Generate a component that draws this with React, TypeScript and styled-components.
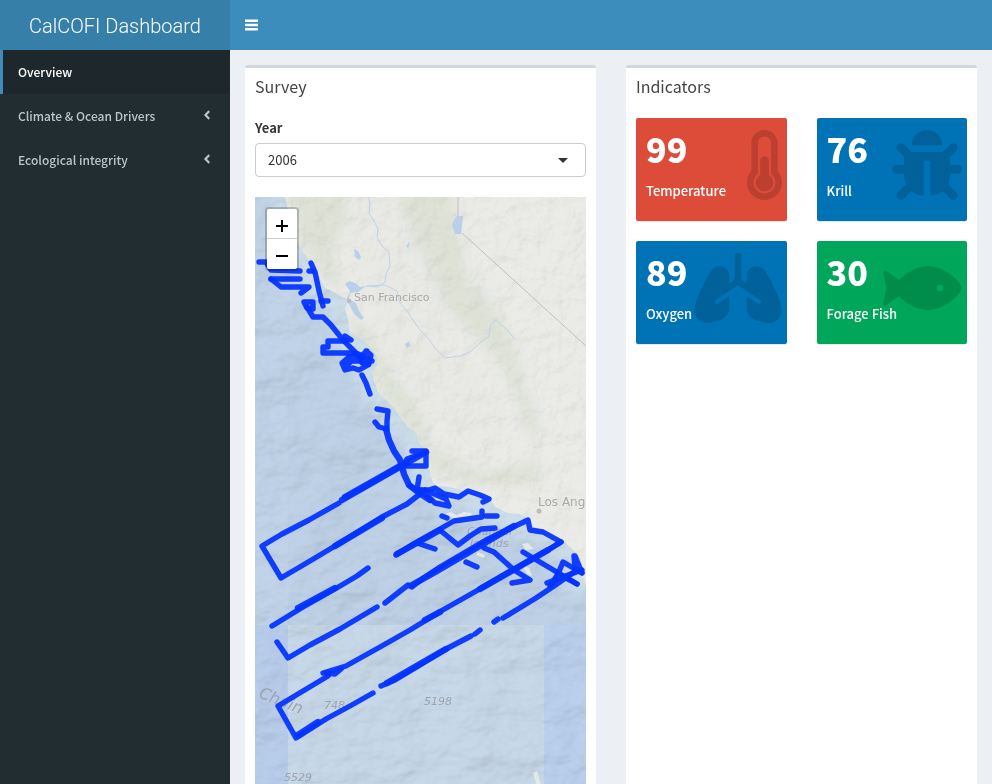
import React from "react";
import styled, { createGlobalStyle } from "styled-components";
import { FaAngleLeft, FaThermometerHalf, FaBug, FaLungs, FaFish } from "react-icons/fa";
import type { IconType } from "react-icons";

const Global = createGlobalStyle`
  *, *::before, *::after { box-sizing: border-box; }
  body {
    margin: 0;
    background: #222d32;
    color: #333;
    font: 400 13px/20px "Noto Sans CJK SC", "Open Sans", sans-serif;
  }
  button, select { font: inherit; color: inherit; }
`;

const Shell = styled.div`
  display: flex;
  flex-direction: column;
  min-height: 100vh;
`;

const Header = styled.header`
  display: flex;
  height: 50px;
  background: #3c8dbc;
  color: #fff;
`;

const Logo = styled.a`
  flex: 0 0 230px;
  background: #367fa9;
  color: #fff;
  font: 300 20px/52px Roboto, "Liberation Sans", Helvetica, sans-serif;
  text-align: center;
  text-decoration: none;
`;

const MenuToggle = styled.button`
  display: flex;
  align-items: center;
  padding: 0 15px;
  border: 0;
  background: none;
  cursor: pointer;
`;

const Columns = styled.div`
  display: flex;
  flex: 1;
`;

const Sidebar = styled.nav`
  flex: 0 0 230px;
  background: #222d32;
`;

const NavLink = styled.a<{ $active?: boolean }>`
  display: flex;
  align-items: center;
  justify-content: space-between;
  height: 44px;
  padding: 0 16px 0 15px;
  border-left: 3px solid ${(p) => (p.$active ? "#3c8dbc" : "transparent")};
  background: ${(p) => (p.$active ? "#1e282c" : "transparent")};
  color: ${(p) => (p.$active ? "#fff" : "#b8c7ce")};
  font-size: 12px;
  font-weight: 500;
  text-decoration: none;
  > svg { margin-bottom: 2px; }
`;

const Content = styled.main`
  display: grid;
  flex: 1;
  grid-template-columns: 1fr 1fr;
  gap: 30px;
  padding: 15px 15px 0;
  background: #ecf0f5;
`;

const Box = styled.section`
  display: flex;
  flex-direction: column;
  min-width: 0;
  border-top: 3px solid #d2d6de;
  border-radius: 3px 3px 0 0;
  background: #fff;
`;

const BoxTitle = styled.h3`
  margin: 0;
  padding: 8px 10px 12px;
  color: #444;
  font-size: 16px;
  font-weight: 400;
  line-height: 20px;
`;

const BoxBody = styled.div`
  display: flex;
  flex: 1;
  flex-direction: column;
  padding: 10px 10px 0;
`;

const FieldLabel = styled.label`
  margin-bottom: 5px;
  font-weight: 700;
`;

const SelectWrap = styled.div`
  display: grid;
  align-items: center;
  margin-bottom: 20px;
  > * { grid-area: 1 / 1; }
  > svg { justify-self: end; margin-right: 18px; pointer-events: none; }
`;

const Select = styled.select`
  width: 100%;
  height: 34px;
  padding: 0 12px;
  border: 1px solid #ccc;
  border-radius: 4px;
  background: #fff;
  appearance: none;
`;

const MapFrame = styled.div`
  position: relative;
  flex: 1;
  min-height: 400px;
  overflow: hidden;
  background: #b9cee4;
`;

const MapArt = styled.svg`
  position: absolute;
  inset: 0;
  width: 100%;
  height: 100%;
`;

const ZoomBar = styled.div`
  position: absolute;
  top: 10px;
  left: 10px;
  border: 2px solid rgba(0, 0, 0, 0.2);
  border-radius: 4px;
  background-clip: padding-box;
`;

const ZoomButton = styled.button`
  display: flex;
  align-items: center;
  justify-content: center;
  width: 30px;
  height: 30px;
  padding: 4px 0 0;
  border: 0;
  background: #fff;
  color: #000;
  cursor: pointer;
  &:first-child { border-bottom: 1px solid #ccc; border-radius: 2px 2px 0 0; }
  &:last-child { border-radius: 0 0 2px 2px; }
`;

const Tiles = styled.div`
  display: grid;
  grid-template-columns: 1fr 1fr;
  gap: 20px 30px;
`;

const Tile = styled.article<{ $color: string }>`
  position: relative;
  height: 103px;
  padding: 10px;
  border-radius: 2px;
  background: ${(p) => p.$color};
  box-shadow: 0 1px 1px rgba(0, 0, 0, 0.1);
  color: #fff;
`;

const TileIcon = styled.span<{ $width: number }>`
  position: absolute;
  top: 12px;
  right: 5px;
  color: rgba(0, 0, 0, 0.15);
  line-height: 0;
  > svg { width: ${(p) => p.$width}px; height: 70px; }
`;

const TileValue = styled.h4`
  position: relative;
  margin: 0 0 10px;
  font-size: 34px;
  font-weight: 900;
  line-height: 42px;
`;

const TileLabel = styled.p`
  position: relative;
  margin: 0;
  font-weight: 500;
  line-height: 22px;
`;

const COAST =
  "285,197 289,215 295,236 300,248 306,256 313,268 320,279 325,288 334,292 342,297 348,299 347,304 345,309 348,319 349,330 355,336 363,340 371,348 377,357 377,365 372,372 374,381 378,392 386,400 394,408 400,417 408,427 417,434 418,442 423,447 427,456 429,468 431,478 435,486 450,487 465,491 480,493 490,498 495,507 508,513 519,514 527,518 532,526 543,530 553,534 563,540 571,548 579,556 582,566 582,576 588,588";

const THIN = 5.4;
const THICK = 6.4;

/* Ship tracks: [points, stroke width] */
const TRACKS: [string, number][] = [
  ["259,262 266,262 271,270 300,271", THIN],
  ["271,279 300,279", THIN],
  ["271,279 281,287 309,287 301,293", THIN],
  ["311,263 315,272 319,291 323,306", THIN],
  ["309,271 313,271", THIN],
  ["321,301 328,301", THIN],
  ["304,302 313,302 313,309 307,308 304,302", THIN],
  ["307,307 313,317 323,317 331,325 343,340 358,355", THIN],
  ["345,336 351,340", THIN],
  ["347,341 328,341 328,347 323,347 323,353 355,353", THIN],
  ["367,351 361,356 349,357 342,363 345,370 353,368 359,370 368,365 371,355 366,351 362,361 351,361 347,366", THIN],
  ["369,364 362,363 358,354 372,361", THIN],
  ["362,375 366,383 370,394", THIN],
  ["377,409 388,411 387,421 387,429 379,427 375,422", THIN],
  ["386,429 389,440 394,451 400,460 404,474 409,485 418,492 430,500", THICK],
  ["412,451 426,451 426,466 403,466 407,459 426,452", THIN],
  ["426,452 342,500", THICK],
  ["339,503 309,520 282,534 262,546 281,578 310,561 340,543 382,517 407,504 420,494", THIN],
  ["345,497 400,466", THICK],
  ["335,546 382,518", THICK],
  ["419,477 417,490 410,486", THIN],
  ["418,490 429,490 435,488 444,494 459,497 468,491 480,495 489,499 483,502", THIN],
  ["421,490 435,503 449,506 446,499 425,490", THIN],
  ["396,555 415,543 440,529 454,521 482,517 482,511", THIN],
  ["397,554 440,530", THICK],
  ["442,516 447,518", THIN],
  ["486,516 497,516", THIN],
  ["441,531 458,545 470,536 481,529 495,528", THIN],
  ["420,544 435,549", THIN],
  ["466,562 477,567", THIN],
  ["385,603 408,585 412,587 422,579 440,567 486,540 528,520 530,530 543,532 561,542 548,550", THIN],
  ["412,585 437,571 483,544 514,526", THICK],
  ["561,542 548,550 513,570 471,594 441,611 410,630 380,647 346,666 323,673", THIN],
  ["548,550 480,589", THICK],
  ["440,612 425,620", THICK],
  ["484,548 494,552 514,570 530,580 512,583", THIN],
  ["523,552 550,568 577,584", THIN],
  ["574,556 575,567 582,573 575,556", THIN],
  ["582,573 563,562 558,574 550,586", THIN],
  ["577,570 554,586 536,598 518,609 503,618", THIN],
  ["547,583 560,578 582,570", THIN],
  ["558,574 570,580 577,584", THIN],
  ["272,626 303,607 335,589 357,576 368,568", THIN],
  ["298,608 335,588", THICK],
  ["277,642 288,658 310,645 340,629 377,607", THIN],
  ["326,673 335,674 341,669", THIN],
  ["328,676 278,706 296,738 326,719 350,706 373,693", THIN],
  ["318,722 298,735", THICK],
  ["381,686 395,680 420,665 446,649 471,636", THIN],
  ["387,683 446,649", THICK],
  ["475,634 480,630", THIN],
  ["494,622 498,619", THIN],
];

function SurveyMap() {
  return (
    <MapArt viewBox="255 197 331 587" preserveAspectRatio="xMidYMin slice" role="img" aria-label="Survey tracks off the California coast">
      <defs>
        <filter id="seabed" x="0" y="0" width="100%" height="100%">
          <feTurbulence type="fractalNoise" baseFrequency="0.018 0.026" numOctaves="4" seed="8" result="n" />
          <feDiffuseLighting in="n" surfaceScale="11" lightingColor="#fff" result="l">
            <feDistantLight azimuth="225" elevation="60" />
          </feDiffuseLighting>
        </filter>
        <filter id="relief" x="0" y="0" width="100%" height="100%">
          <feTurbulence type="fractalNoise" baseFrequency="0.05" numOctaves="4" seed="21" result="n" />
          <feDiffuseLighting in="n" surfaceScale="7" lightingColor="#fff">
            <feDistantLight azimuth="225" elevation="60" />
          </feDiffuseLighting>
        </filter>
        <filter id="soft" x="-20%" y="-20%" width="140%" height="140%">
          <feGaussianBlur stdDeviation="6" />
        </filter>
        <clipPath id="land">
          <polygon points={`${COAST} 588,190 285,190`} />
        </clipPath>
      </defs>

      <rect x="255" y="197" width="331" height="587" fill="#c0d3e8" />
      <rect x="288" y="370" width="298" height="414" fill="#bed1e6" />
      <polyline points={COAST} fill="none" stroke="#cddeeb" strokeWidth="34" filter="url(#soft)" />
      <rect x="288" y="625" width="256" height="159" fill="#c7d8e8" />
      <rect x="255" y="625" width="33" height="159" fill="#b8cdea" />
      <rect x="544" y="625" width="42" height="159" fill="#bad0ec" />
      <rect x="255" y="197" width="331" height="587" filter="url(#seabed)" opacity="0.2" style={{ mixBlendMode: "multiply" }} />

      <g clipPath="url(#land)">
        <rect x="255" y="190" width="333" height="400" fill="#ebebe8" />
        <g fill="#dde2d6" filter="url(#soft)" opacity="0.9">
          <path d="M285 190 L346 190 L352 215 L338 240 L335 262 L345 284 L328 286 L300 245Z" />
          <path d="M394 190 L452 190 L460 240 L468 280 L495 305 L514 345 L526 390 L542 430 L525 435 L516 395 L490 350 L448 312 L425 270 L402 228Z" />
          <path d="M350 315 L372 332 L390 370 L418 405 L432 445 L470 470 L510 468 L540 458 L535 485 L470 484 L430 470 L400 418 L376 385 L350 335Z" />
        </g>
        <path d="M350 190 L388 190 L420 260 L455 340 L495 400 L510 445 L480 460 L438 424 L398 370 L378 320 L360 280Z" fill="#e9e9e6" filter="url(#soft)" />
        <rect x="255" y="190" width="333" height="400" filter="url(#relief)" opacity="0.1" style={{ mixBlendMode: "multiply" }} />
        <g fill="#b9d0e8">
          <path d="M345 284 L349 281 L355 283 L360 287 L366 286 L358 292 L350 293 L349 299 L356 303 L359 311 L364 318 L361 320 L354 314 L350 306 L347 298 L350 291Z" />
          <path d="M354 249 L358 251 L361 257 L359 260 L355 257Z" />
          <path d="M454 220 L457 216 L463 216 L462 225 L461 234 L455 234 L452 226Z" />
          <path d="M406 246 L410 241 L408 249Z" />
          <path d="M405 344 L409 341 L410 346 L407 348Z" />
        </g>
        <g fill="none" stroke="#bdd3ea" strokeWidth="1">
          <path d="M368 197 L370 203 L369 213 L374 221 L378 229 L377 237 L382 246 L389 252 L390 266 L386 274 L385 282 L378 287 L366 286" />
          <path d="M366 286 L385 285 L397 291 L400 303 L407 311 L413 320 L420 330 L428 338 L436 349 L445 358 L460 356 L470 352 L480 343 L489 336 L491 324 L496 320 L504 327 L515 339" />
        </g>
        <path d="M458 197 V216 M462 233 L586 346" fill="none" stroke="#c0c0c0" strokeWidth="1" />
      </g>

      <g fill="#e4e8e6">
        <path d="M445 514 L451 512 L456 515 L464 512 L472 513 L470 518 L461 517 L455 519Z" />
        <path d="M478 552 L485 555 L484 558 L476 555Z M522 544 L528 543 L534 549 L526 550Z M521 564 L529 568 L532 576 L527 574Z" />
        <path d="M533 773 L537 771 L540 782 L542 786 L537 786Z" />
      </g>

      <g fontFamily='"DejaVu Sans", Verdana, sans-serif' fill="#a9a9a9">
        <circle cx="349" cy="301" r="2.4" fill="#bdbdbd" />
        <circle cx="539" cy="511" r="2.6" fill="#bdbdbd" />
        <text x="354" y="301" fontSize="11">San Francisco</text>
        <text x="538" y="506" fontSize="12">Los Ang</text>
        <g fontStyle="italic" fill="#9da4ac">
          <text x="467" y="535" fontSize="11">Channel</text>
          <text x="470" y="547" fontSize="11">Islands</text>
          <text x="424" y="705" fontSize="11">5198</text>
          <text x="324" y="709" fontSize="11">748</text>
          <text x="284" y="781" fontSize="11">5529</text>
          <text transform="translate(258 697) rotate(22)" fontSize="16">Chain</text>
        </g>
      </g>

      <g fill="none" stroke="#0433ff" strokeOpacity="0.94" strokeLinecap="round" strokeLinejoin="round">
        {TRACKS.map(([points, width]) => (
          <polyline key={points} points={points} strokeWidth={width} />
        ))}
      </g>
    </MapArt>
  );
}

type Indicator = { value: number; label: string; color: string; icon: IconType; iconWidth: number };

const INDICATORS: Indicator[] = [
  { value: 99, label: "Temperature", color: "#dd4b39", icon: FaThermometerHalf, iconWidth: 35 },
  { value: 76, label: "Krill", color: "#0073b7", icon: FaBug, iconWidth: 70 },
  { value: 89, label: "Oxygen", color: "#0073b7", icon: FaLungs, iconWidth: 88 },
  { value: 30, label: "Forage Fish", color: "#00a65a", icon: FaFish, iconWidth: 79 },
];

export default function App() {
  return (
    <>
      <Global />
      <Shell>
        <Header>
          <Logo href="#">CalCOFI Dashboard</Logo>
          <MenuToggle type="button" aria-label="Toggle navigation">
            <svg width="13" height="12" viewBox="0 0 13 12" fill="#fff" aria-hidden="true">
              <rect y="0.4" width="13" height="2.6" rx="0.4" />
              <rect y="4.7" width="13" height="2.6" rx="0.4" />
              <rect y="9" width="13" height="2.6" rx="0.4" />
            </svg>
          </MenuToggle>
        </Header>
        <Columns>
          <Sidebar>
            <NavLink href="#overview" $active>Overview</NavLink>
            <NavLink href="#climate">
              Climate &amp; Ocean Drivers
              <FaAngleLeft size={14} />
            </NavLink>
            <NavLink href="#ecology">
              Ecological integrity
              <FaAngleLeft size={14} />
            </NavLink>
          </Sidebar>
          <Content>
            <Box>
              <BoxTitle>Survey</BoxTitle>
              <BoxBody>
                <FieldLabel htmlFor="year">Year</FieldLabel>
                <SelectWrap>
                  <Select id="year" defaultValue="2006">
                    <option>2006</option>
                  </Select>
                  <svg width="10" height="5" viewBox="0 0 10 5" aria-hidden="true">
                    <path d="M0 0H10L5 5Z" fill="#333" />
                  </svg>
                </SelectWrap>
                <MapFrame>
                  <SurveyMap />
                  <ZoomBar>
                    <ZoomButton type="button" aria-label="Zoom in">
                      <svg width="12" height="12" viewBox="0 0 12 12">
                        <path d="M0 6H12M6 0V12" stroke="#000" strokeWidth="2" />
                      </svg>
                    </ZoomButton>
                    <ZoomButton type="button" aria-label="Zoom out">
                      <svg width="12" height="12" viewBox="0 0 12 12">
                        <path d="M0 6H12" stroke="#000" strokeWidth="2" />
                      </svg>
                    </ZoomButton>
                  </ZoomBar>
                </MapFrame>
              </BoxBody>
            </Box>
            <Box>
              <BoxTitle>Indicators</BoxTitle>
              <BoxBody>
                <Tiles>
                  {INDICATORS.map(({ value, label, color, icon: Icon, iconWidth }) => (
                    <Tile key={label} $color={color}>
                      <TileIcon $width={iconWidth}>
                        <Icon />
                      </TileIcon>
                      <TileValue>{value}</TileValue>
                      <TileLabel>{label}</TileLabel>
                    </Tile>
                  ))}
                </Tiles>
              </BoxBody>
            </Box>
          </Content>
        </Columns>
      </Shell>
    </>
  );
}
